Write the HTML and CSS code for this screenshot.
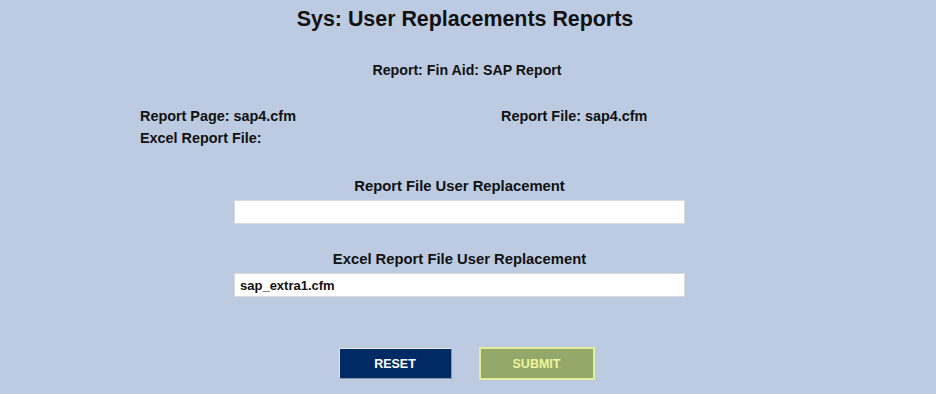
FILE: index.html
```html
<!DOCTYPE html>
<html lang="en">
<head>
<meta charset="UTF-8">
<title>Sys: User Replacements Reports</title>
<link rel="stylesheet" href="styles.css">
</head>
<body>
<div id="page">
  <h1>Sys: User Replacements Reports</h1>
  <p class="report-name">Report: Fin Aid: SAP Report</p>

  <div class="info">
    <div class="info-row">
      <span class="info-left">Report Page: sap4.cfm</span>
      <span>Report File: sap4.cfm</span>
    </div>
    <div class="info-row">
      <span class="info-left">Excel Report File:</span>
    </div>
  </div>

  <form class="replace-form">
    <label for="reportFile">Report File User Replacement</label>
    <input type="text" id="reportFile" value="">

    <label for="excelFile" class="second">Excel Report File User Replacement</label>
    <input type="text" id="excelFile" value="sap_extra1.cfm">
  </form>

  <div class="buttons">
    <button type="reset" class="btn-reset">RESET</button>
    <button type="submit" class="btn-submit">SUBMIT</button>
  </div>
</div>
</body>
</html>
```

FILE: styles.css
```css
body {
  margin: 0;
  padding: 0;
  background-color: #bccbe2;
  font-family: "Liberation Sans", Arial, sans-serif;
  color: #111;
}

#page {
  width: 936px;
  padding-top: 7px;
}

h1 {
  margin: 0;
  padding-right: 6px;
  text-align: center;
  font-size: 21.4px;
  font-weight: bold;
  line-height: 24px;
}

.report-name {
  margin: 31px 0 0 0;
  padding-right: 2px;
  text-align: center;
  font-size: 14.2px;
  font-weight: bold;
  line-height: 16px;
}

.info {
  margin-top: 27px;
  padding-left: 140px;
  font-size: 14.4px;
  font-weight: bold;
}

.info-row {
  display: flex;
  line-height: 22px;
}

.info-left {
  width: 361px;
}

/* replacement fields */
.replace-form {
  display: flex;
  flex-direction: column;
  align-items: center;
  margin: 28px 0 0 0;
  padding-right: 17px;
}

.replace-form label {
  font-size: 14.8px;
  font-weight: bold;
  line-height: 18px;
  margin-bottom: 5px;
}

.replace-form label.second {
  margin-top: 26px;
}

.replace-form input {
  box-sizing: border-box;
  width: 451px;
  height: 24px;
  margin: 0;
  padding: 0 5px;
  border: 1px solid #d9d9d9;
  background: #fff;
  font-family: "Liberation Sans", Arial, sans-serif;
  font-size: 13px;
  font-weight: bold;
  color: #111;
  outline: none;
}

.buttons {
  display: flex;
  justify-content: center;
  align-items: center;
  gap: 27px;
  margin-top: 50px;
  padding-right: 3px;
}

.buttons button {
  box-sizing: border-box;
  padding: 0;
  font-family: "Liberation Sans", Arial, sans-serif;
  font-size: 12.5px;
  font-weight: bold;
  cursor: pointer;
}

.btn-reset {
  width: 113px;
  height: 31px;
  background-color: #002a63;
  color: #fff;
  border: 1px solid #8c97a8;
  border-top-color: #e6e6e6;
  border-left-color: #e6e6e6;
}

.btn-submit {
  width: 116px;
  height: 33px;
  background-color: #94a86b;
  color: #eef59a;
  border: 2px solid #e4ee9c;
}
```
